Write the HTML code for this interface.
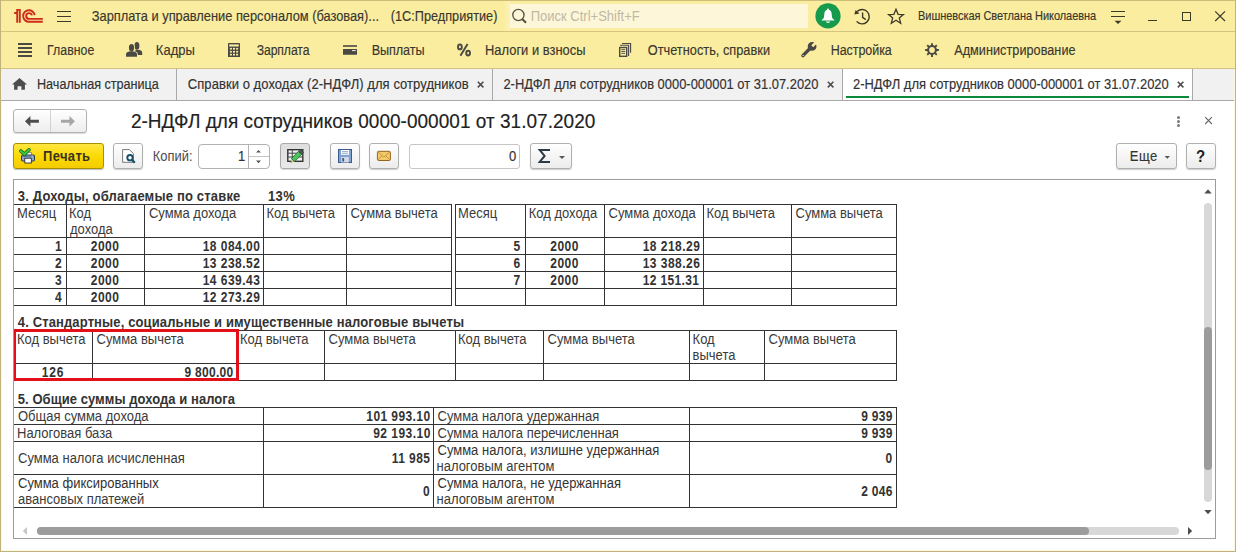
<!DOCTYPE html>
<html><head><meta charset="utf-8"><style>
html,body{margin:0;padding:0;}
body{width:1236px;height:552px;overflow:hidden;position:relative;font-family:"Liberation Sans",sans-serif;background:#fff;}
.r{position:absolute;}
.t{position:absolute;white-space:nowrap;}
</style></head><body>
<div class="r" style="left:13px;top:109px;width:74px;height:24px;border:1px solid #b2b2b2;border-radius:3px;box-sizing:border-box;background:linear-gradient(#ffffff,#ededed);box-shadow:0 1px 1px rgba(0,0,0,0.15)"></div>
<div class="r" style="left:50px;top:110px;width:1px;height:22px;background:#d2d2d2"></div>
<svg class="r" style="left:23px;top:114px" width="18" height="14" viewBox="23 114 18 14"><path d="M25 121.3 L30.4 116.1 L30.4 119.8 L38.9 119.8 L38.9 122.8 L30.4 122.8 L30.4 126.6 Z" fill="#4d4d4d"/></svg>
<svg class="r" style="left:59px;top:114px" width="18" height="14" viewBox="59 114 18 14"><path d="M74.9 121.3 L69.5 116.1 L69.5 119.8 L61 119.8 L61 122.8 L69.5 122.8 L69.5 126.6 Z" fill="#a6a6a6"/></svg>
<div class="t" style="left:130.90px;top:110px;font-size:19px;line-height:24px;color:#222;letter-spacing:0.023px;-webkit-text-stroke:0.15px #222;transform:scaleY(1.080);transform-origin:0 18px;">2-НДФЛ для сотрудников 0000-000001 от 31.07.2020</div>
<div class="r" style="left:1177px;top:115.5px;width:3px;height:3px;background:#7a7a7a;border-radius:50%"></div>
<div class="r" style="left:1177px;top:119.5px;width:3px;height:3px;background:#7a7a7a;border-radius:50%"></div>
<div class="r" style="left:1177px;top:123.5px;width:3px;height:3px;background:#7a7a7a;border-radius:50%"></div>
<svg class="r" style="left:1203px;top:115px" width="11" height="11" viewBox="1203 115 11 11"><path d="M1205.2 117.2 L1211.9 124 M1211.9 117.2 L1205.2 124" stroke="#666" stroke-width="1.1"/></svg>
<div class="r" style="left:13px;top:143px;width:91px;height:26px;border:1px solid #a89000;border-radius:3px;box-sizing:border-box;background:linear-gradient(#ffe640,#fcd900 55%,#f4cc00);box-shadow:0 1px 1px rgba(0,0,0,0.25)"></div>
<svg class="r" style="left:18px;top:146px" width="20" height="20" viewBox="18 146 20 20"><rect x="26.6" y="152.3" width="4.8" height="3.2" fill="#fff" stroke="#666" stroke-width="0.6"/>
<rect x="21.5" y="155" width="13" height="6" rx="1" fill="#8ba2c9" stroke="#2a3a4f" stroke-width="1"/>
<path d="M22.3 156.3 L33.7 156.3" stroke="#5c76a0" stroke-width="1"/>
<rect x="31.5" y="155.8" width="1.2" height="0.9" fill="#fff"/>
<rect x="24.8" y="158.2" width="6.5" height="4.8" fill="#fff" stroke="#2f2f2f" stroke-width="0.9"/>
<path d="M20.9 151 L24.4 154.2 L29 149.8" stroke="#1d6a1d" stroke-width="3.6" fill="none" stroke-linecap="round"/>
<path d="M20.9 151 L24.4 154.2 L29 149.8" stroke="#3ccb3c" stroke-width="2" fill="none" stroke-linecap="round"/></svg>
<div class="t" style="left:43.00px;top:149px;font-size:13px;line-height:16px;color:#383421;letter-spacing:0.340px;font-weight:bold;transform:scaleY(1.080);transform-origin:0 12px;">Печать</div>
<div class="r" style="left:113px;top:143px;width:30px;height:26px;border:1px solid #b0b0b0;border-radius:3px;box-sizing:border-box;background:linear-gradient(#ffffff,#ececec);box-shadow:0 1px 1px rgba(0,0,0,0.2)"></div>
<svg class="r" style="left:120px;top:147px" width="18" height="18" viewBox="120 147 18 18"><path d="M122.6 149.6 L129.3 149.6 L133.3 153.4 L133.3 162.3 L122.6 162.3 Z" fill="#fff" stroke="#6a6a6a" stroke-width="0.9"/>
<circle cx="130" cy="157.7" r="2.7" fill="none" stroke="#154e66" stroke-width="1.9"/>
<path d="M131.9 159.7 L134.8 162.8" stroke="#154e66" stroke-width="2.2"/></svg>
<div class="t" style="left:152.80px;top:149px;font-size:12.95px;line-height:16px;color:#4d4d4d;letter-spacing:-0.020px;transform:scaleY(1.084);transform-origin:0 12px;">Копий:</div>
<div class="r" style="left:198px;top:144px;width:72px;height:25px;border:1px solid #b2b2b2;border-radius:4px;box-sizing:border-box;background:#fff"></div>
<div class="r" style="left:248px;top:145px;width:1px;height:23px;background:#b2b2b2"></div>
<div class="r" style="left:249px;top:156px;width:20px;height:1px;background:#c4c4c4"></div>
<svg class="r" style="left:254px;top:148px" width="9" height="16" viewBox="254 148 9 16"><path d="M256 152.6 L261 152.6 L258.5 150 Z M256 160.6 L261 160.6 L258.5 163.2 Z" fill="#555"/></svg>
<div class="t" style="left:238.00px;top:149px;font-size:13px;line-height:16px;color:#333;-webkit-text-stroke:0.15px #333;transform:scaleY(1.080);transform-origin:0 12px;">1</div>
<div class="r" style="left:280px;top:143px;width:30px;height:26px;border:1px solid #aaaaaa;border-radius:3px;box-sizing:border-box;background:linear-gradient(#dedede,#e9e9e9);box-shadow:0 1px 1px rgba(0,0,0,0.15)"></div>
<svg class="r" style="left:285px;top:147px" width="20" height="18" viewBox="285 147 20 18"><rect x="287.8" y="149.7" width="15" height="11.6" fill="#f2f2f2" stroke="#333" stroke-width="1.4"/>
<path d="M287.8 153.2 L302.8 153.2 M287.8 157 L302.8 157 M292.3 149.7 L292.3 161.3" stroke="#444" stroke-width="1"/>
<g transform="rotate(-45 296.5 156.5)">
<path d="M288 156.5 L291.5 154.3 L291.5 158.7 Z" fill="#d9c48a"/>
<path d="M288 156.5 L289.3 155.7 L289.3 157.3 Z" fill="#333"/>
<rect x="291.5" y="154.3" width="10" height="4.4" fill="#4cc35a" stroke="#23602c" stroke-width="0.7"/>
<rect x="301.5" y="154.3" width="2.8" height="4.4" fill="#4f5a55" stroke="#2f3a35" stroke-width="0.6"/>
</g></svg>
<div class="r" style="left:330px;top:143px;width:30px;height:26px;border:1px solid #b0b0b0;border-radius:3px;box-sizing:border-box;background:linear-gradient(#ffffff,#ececec);box-shadow:0 1px 1px rgba(0,0,0,0.2)"></div>
<svg class="r" style="left:336px;top:147px" width="18" height="18" viewBox="336 147 18 18"><rect x="338.5" y="149.5" width="13" height="13" fill="#7fa3d3" stroke="#3b5b8e" stroke-width="1"/>
<rect x="341" y="150" width="8" height="4.8" fill="#fff"/>
<path d="M342 151.6 L348 151.6 M342 153.3 L348 153.3" stroke="#7f97bb" stroke-width="0.8"/>
<rect x="341.2" y="157" width="7.6" height="5.5" fill="#d5dbe4"/>
<rect x="342.3" y="158" width="1.8" height="3.5" fill="#3b5b8e"/></svg>
<div class="r" style="left:369px;top:143px;width:30px;height:26px;border:1px solid #b0b0b0;border-radius:3px;box-sizing:border-box;background:linear-gradient(#ffffff,#ececec);box-shadow:0 1px 1px rgba(0,0,0,0.2)"></div>
<svg class="r" style="left:375px;top:149px" width="18" height="14" viewBox="375 149 18 14"><rect x="377.4" y="151.3" width="13" height="9.2" rx="1.2" fill="#f3ca6a" stroke="#94661c" stroke-width="1"/>
<path d="M377.8 151.8 L383.9 157 L390 151.8 M377.8 160 L382 155.8 M390 160 L385.8 155.8" stroke="#b98a34" stroke-width="0.8" fill="none"/></svg>
<div class="r" style="left:409px;top:144px;width:111px;height:25px;border:1px solid #c6c6c6;border-radius:3px;box-sizing:border-box;background:#fff"></div>
<div class="t" style="left:509.00px;top:149px;font-size:13px;line-height:16px;color:#333;-webkit-text-stroke:0.15px #333;transform:scaleY(1.080);transform-origin:0 12px;">0</div>
<div class="r" style="left:530px;top:143px;width:42px;height:26px;border:1px solid #b0b0b0;border-radius:3px;box-sizing:border-box;background:linear-gradient(#ffffff,#ececec);box-shadow:0 1px 1px rgba(0,0,0,0.2)"></div>
<svg class="r" style="left:536px;top:147px" width="18" height="18" viewBox="536 147 18 18"><path d="M550 150 L539.7 150 L544.6 155.9 L539.7 161.9 L550 161.9" stroke="#2f3a44" stroke-width="2" fill="none" stroke-linejoin="miter"/></svg>
<svg class="r" style="left:557px;top:154px" width="10" height="6" viewBox="557 154 10 6"><path d="M559 156.1 L565 156.1 L562 159.1 Z" fill="#555"/></svg>
<div class="r" style="left:1116px;top:143px;width:61px;height:26px;border:1px solid #b0b0b0;border-radius:3px;box-sizing:border-box;background:linear-gradient(#ffffff,#ececec);box-shadow:0 1px 1px rgba(0,0,0,0.2)"></div>
<div class="t" style="left:1129.80px;top:149px;font-size:13px;line-height:16px;color:#333;letter-spacing:0.500px;-webkit-text-stroke:0.15px #333;transform:scaleY(1.080);transform-origin:0 12px;">Еще</div>
<svg class="r" style="left:1162px;top:154px" width="10" height="6" viewBox="1162 154 10 6"><path d="M1164.6 156.1 L1170 156.1 L1167.3 158.8 Z" fill="#555"/></svg>
<div class="r" style="left:1186px;top:143px;width:30px;height:26px;border:1px solid #b0b0b0;border-radius:3px;box-sizing:border-box;background:linear-gradient(#ffffff,#ececec);box-shadow:0 1px 1px rgba(0,0,0,0.2)"></div>
<div class="t" style="left:1196.00px;top:147px;font-size:15px;line-height:19px;color:#222;font-weight:bold;transform:scaleY(1.080);transform-origin:0 15px;">?</div>
<div class="r" style="left:13px;top:179px;width:1203px;height:360px;border:1px solid #9c9c9c;box-sizing:border-box;background:#fff"></div>
<div class="t" style="left:17.80px;top:189px;font-size:13px;line-height:16px;color:#333;letter-spacing:0.180px;font-weight:bold;transform:scaleY(1.080);transform-origin:0 12px;">3. Доходы, облагаемые по ставке</div>
<div class="t" style="left:267.90px;top:189px;font-size:13px;line-height:16px;color:#333;letter-spacing:0.400px;font-weight:bold;transform:scaleY(1.080);transform-origin:0 12px;">13%</div>
<div class="r" style="left:13px;top:204px;width:439px;height:1px;background:#333"></div>
<div class="r" style="left:13px;top:237px;width:439px;height:1px;background:#333"></div>
<div class="r" style="left:13px;top:254px;width:439px;height:1px;background:#333"></div>
<div class="r" style="left:13px;top:271px;width:439px;height:1px;background:#333"></div>
<div class="r" style="left:13px;top:288px;width:439px;height:1px;background:#333"></div>
<div class="r" style="left:13px;top:305px;width:439px;height:1px;background:#333"></div>
<div class="r" style="left:13px;top:204px;width:1px;height:102px;background:#333"></div>
<div class="r" style="left:66px;top:204px;width:1px;height:102px;background:#333"></div>
<div class="r" style="left:144px;top:204px;width:1px;height:102px;background:#333"></div>
<div class="r" style="left:263px;top:204px;width:1px;height:102px;background:#333"></div>
<div class="r" style="left:346px;top:204px;width:1px;height:102px;background:#333"></div>
<div class="r" style="left:451px;top:204px;width:1px;height:102px;background:#333"></div>
<div class="r" style="left:455px;top:204px;width:442px;height:1px;background:#333"></div>
<div class="r" style="left:455px;top:237px;width:442px;height:1px;background:#333"></div>
<div class="r" style="left:455px;top:254px;width:442px;height:1px;background:#333"></div>
<div class="r" style="left:455px;top:271px;width:442px;height:1px;background:#333"></div>
<div class="r" style="left:455px;top:288px;width:442px;height:1px;background:#333"></div>
<div class="r" style="left:455px;top:305px;width:442px;height:1px;background:#333"></div>
<div class="r" style="left:455px;top:204px;width:1px;height:102px;background:#333"></div>
<div class="r" style="left:525px;top:204px;width:1px;height:102px;background:#333"></div>
<div class="r" style="left:604px;top:204px;width:1px;height:102px;background:#333"></div>
<div class="r" style="left:703px;top:204px;width:1px;height:102px;background:#333"></div>
<div class="r" style="left:791px;top:204px;width:1px;height:102px;background:#333"></div>
<div class="r" style="left:896px;top:204px;width:1px;height:102px;background:#333"></div>
<div class="t" style="left:17.00px;top:206px;font-size:13px;line-height:16px;color:#3b3b3b;transform:scaleY(1.080);transform-origin:0 12px;">Месяц</div>
<div class="t" style="left:69.00px;top:206px;font-size:13px;line-height:16px;color:#3b3b3b;transform:scaleY(1.080);transform-origin:0 12px;">Код</div>
<div class="t" style="left:70.00px;top:222px;font-size:13px;line-height:16px;color:#3b3b3b;transform:scaleY(1.080);transform-origin:0 12px;">дохода</div>
<div class="t" style="left:148.90px;top:206px;font-size:13px;line-height:16px;color:#3b3b3b;transform:scaleY(1.080);transform-origin:0 12px;">Сумма дохода</div>
<div class="t" style="left:266.50px;top:206px;font-size:13px;line-height:16px;color:#3b3b3b;transform:scaleY(1.080);transform-origin:0 12px;">Код вычета</div>
<div class="t" style="left:350.40px;top:206px;font-size:13px;line-height:16px;color:#3b3b3b;transform:scaleY(1.080);transform-origin:0 12px;">Сумма вычета</div>
<div class="t" style="left:458.00px;top:206px;font-size:13px;line-height:16px;color:#3b3b3b;transform:scaleY(1.080);transform-origin:0 12px;">Месяц</div>
<div class="t" style="left:528.70px;top:206px;font-size:13px;line-height:16px;color:#3b3b3b;transform:scaleY(1.080);transform-origin:0 12px;">Код дохода</div>
<div class="t" style="left:608.50px;top:206px;font-size:13px;line-height:16px;color:#3b3b3b;transform:scaleY(1.080);transform-origin:0 12px;">Сумма дохода</div>
<div class="t" style="left:706.50px;top:206px;font-size:13px;line-height:16px;color:#3b3b3b;transform:scaleY(1.080);transform-origin:0 12px;">Код вычета</div>
<div class="t" style="left:795.50px;top:206px;font-size:13px;line-height:16px;color:#3b3b3b;transform:scaleY(1.080);transform-origin:0 12px;">Сумма вычета</div>
<div class="t" style="left:55.00px;top:240px;font-size:12px;line-height:15px;color:#333;font-weight:bold;transform:scaleY(1.150);transform-origin:0 11px;">1</div>
<div class="t" style="left:90.79px;top:240px;font-size:12px;line-height:15px;color:#333;letter-spacing:0.473px;font-weight:bold;transform:scaleY(1.150);transform-origin:0 11px;">2000</div>
<div class="t" style="left:202.66px;top:240px;font-size:12px;line-height:15px;color:#333;letter-spacing:0.480px;font-weight:bold;transform:scaleY(1.150);transform-origin:0 11px;">18 084.00</div>
<div class="t" style="left:55.00px;top:257px;font-size:12px;line-height:15px;color:#333;font-weight:bold;transform:scaleY(1.150);transform-origin:0 11px;">2</div>
<div class="t" style="left:90.79px;top:257px;font-size:12px;line-height:15px;color:#333;letter-spacing:0.473px;font-weight:bold;transform:scaleY(1.150);transform-origin:0 11px;">2000</div>
<div class="t" style="left:202.66px;top:257px;font-size:12px;line-height:15px;color:#333;letter-spacing:0.480px;font-weight:bold;transform:scaleY(1.150);transform-origin:0 11px;">13 238.52</div>
<div class="t" style="left:55.00px;top:274px;font-size:12px;line-height:15px;color:#333;font-weight:bold;transform:scaleY(1.150);transform-origin:0 11px;">3</div>
<div class="t" style="left:90.79px;top:274px;font-size:12px;line-height:15px;color:#333;letter-spacing:0.473px;font-weight:bold;transform:scaleY(1.150);transform-origin:0 11px;">2000</div>
<div class="t" style="left:202.66px;top:274px;font-size:12px;line-height:15px;color:#333;letter-spacing:0.480px;font-weight:bold;transform:scaleY(1.150);transform-origin:0 11px;">14 639.43</div>
<div class="t" style="left:55.00px;top:291px;font-size:12px;line-height:15px;color:#333;font-weight:bold;transform:scaleY(1.150);transform-origin:0 11px;">4</div>
<div class="t" style="left:90.79px;top:291px;font-size:12px;line-height:15px;color:#333;letter-spacing:0.473px;font-weight:bold;transform:scaleY(1.150);transform-origin:0 11px;">2000</div>
<div class="t" style="left:202.66px;top:291px;font-size:12px;line-height:15px;color:#333;letter-spacing:0.480px;font-weight:bold;transform:scaleY(1.150);transform-origin:0 11px;">12 273.29</div>
<div class="t" style="left:513.50px;top:240px;font-size:12px;line-height:15px;color:#333;font-weight:bold;transform:scaleY(1.150);transform-origin:0 11px;">5</div>
<div class="t" style="left:550.29px;top:240px;font-size:12px;line-height:15px;color:#333;letter-spacing:0.473px;font-weight:bold;transform:scaleY(1.150);transform-origin:0 11px;">2000</div>
<div class="t" style="left:642.66px;top:240px;font-size:12px;line-height:15px;color:#333;letter-spacing:0.480px;font-weight:bold;transform:scaleY(1.150);transform-origin:0 11px;">18 218.29</div>
<div class="t" style="left:513.50px;top:257px;font-size:12px;line-height:15px;color:#333;font-weight:bold;transform:scaleY(1.150);transform-origin:0 11px;">6</div>
<div class="t" style="left:550.29px;top:257px;font-size:12px;line-height:15px;color:#333;letter-spacing:0.473px;font-weight:bold;transform:scaleY(1.150);transform-origin:0 11px;">2000</div>
<div class="t" style="left:642.66px;top:257px;font-size:12px;line-height:15px;color:#333;letter-spacing:0.480px;font-weight:bold;transform:scaleY(1.150);transform-origin:0 11px;">13 388.26</div>
<div class="t" style="left:513.50px;top:274px;font-size:12px;line-height:15px;color:#333;font-weight:bold;transform:scaleY(1.150);transform-origin:0 11px;">7</div>
<div class="t" style="left:550.29px;top:274px;font-size:12px;line-height:15px;color:#333;letter-spacing:0.473px;font-weight:bold;transform:scaleY(1.150);transform-origin:0 11px;">2000</div>
<div class="t" style="left:642.66px;top:274px;font-size:12px;line-height:15px;color:#333;letter-spacing:0.355px;font-weight:bold;transform:scaleY(1.150);transform-origin:0 11px;">12 151.31</div>
<div class="t" style="left:17.80px;top:315px;font-size:13px;line-height:16px;color:#333;letter-spacing:0.129px;font-weight:bold;transform:scaleY(1.080);transform-origin:0 12px;">4. Стандартные, социальные и имущественные налоговые вычеты</div>
<div class="r" style="left:13px;top:330px;width:884px;height:1px;background:#333"></div>
<div class="r" style="left:13px;top:363px;width:884px;height:1px;background:#333"></div>
<div class="r" style="left:13px;top:380px;width:884px;height:1px;background:#333"></div>
<div class="r" style="left:13px;top:330px;width:1px;height:51px;background:#333"></div>
<div class="r" style="left:92px;top:330px;width:1px;height:51px;background:#333"></div>
<div class="r" style="left:237px;top:330px;width:1px;height:51px;background:#333"></div>
<div class="r" style="left:324px;top:330px;width:1px;height:51px;background:#333"></div>
<div class="r" style="left:455px;top:330px;width:1px;height:51px;background:#333"></div>
<div class="r" style="left:543px;top:330px;width:1px;height:51px;background:#333"></div>
<div class="r" style="left:689px;top:330px;width:1px;height:51px;background:#333"></div>
<div class="r" style="left:764px;top:330px;width:1px;height:51px;background:#333"></div>
<div class="r" style="left:896px;top:330px;width:1px;height:51px;background:#333"></div>
<div class="t" style="left:17.00px;top:332px;font-size:13px;line-height:16px;color:#3b3b3b;transform:scaleY(1.080);transform-origin:0 12px;">Код вычета</div>
<div class="t" style="left:96.50px;top:332px;font-size:13px;line-height:16px;color:#3b3b3b;transform:scaleY(1.080);transform-origin:0 12px;">Сумма вычета</div>
<div class="t" style="left:240.00px;top:332px;font-size:13px;line-height:16px;color:#3b3b3b;transform:scaleY(1.080);transform-origin:0 12px;">Код вычета</div>
<div class="t" style="left:328.50px;top:332px;font-size:13px;line-height:16px;color:#3b3b3b;transform:scaleY(1.080);transform-origin:0 12px;">Сумма вычета</div>
<div class="t" style="left:458.00px;top:332px;font-size:13px;line-height:16px;color:#3b3b3b;transform:scaleY(1.080);transform-origin:0 12px;">Код вычета</div>
<div class="t" style="left:547.50px;top:332px;font-size:13px;line-height:16px;color:#3b3b3b;transform:scaleY(1.080);transform-origin:0 12px;">Сумма вычета</div>
<div class="t" style="left:692.60px;top:332px;font-size:13px;line-height:16px;color:#3b3b3b;transform:scaleY(1.080);transform-origin:0 12px;">Код</div>
<div class="t" style="left:692.60px;top:348px;font-size:13px;line-height:16px;color:#3b3b3b;transform:scaleY(1.080);transform-origin:0 12px;">вычета</div>
<div class="t" style="left:768.50px;top:332px;font-size:13px;line-height:16px;color:#3b3b3b;transform:scaleY(1.080);transform-origin:0 12px;">Сумма вычета</div>
<div class="t" style="left:41.82px;top:366px;font-size:12px;line-height:15px;color:#333;letter-spacing:0.780px;font-weight:bold;transform:scaleY(1.150);transform-origin:0 11px;">126</div>
<div class="t" style="left:184.50px;top:366px;font-size:12px;line-height:15px;color:#333;letter-spacing:0.286px;font-weight:bold;transform:scaleY(1.150);transform-origin:0 11px;">9 800.00</div>
<div class="r" style="left:13px;top:329px;width:226px;height:52px;border:3px solid #e3101a;box-sizing:border-box"></div>
<div class="t" style="left:17.80px;top:392px;font-size:13px;line-height:16px;color:#333;letter-spacing:0.055px;font-weight:bold;transform:scaleY(1.080);transform-origin:0 12px;">5. Общие суммы дохода и налога</div>
<div class="r" style="left:13px;top:407px;width:884px;height:1px;background:#333"></div>
<div class="r" style="left:13px;top:424px;width:884px;height:1px;background:#333"></div>
<div class="r" style="left:13px;top:441px;width:884px;height:1px;background:#333"></div>
<div class="r" style="left:13px;top:474px;width:884px;height:1px;background:#333"></div>
<div class="r" style="left:13px;top:507px;width:884px;height:1px;background:#333"></div>
<div class="r" style="left:13px;top:407px;width:1px;height:101px;background:#333"></div>
<div class="r" style="left:263px;top:407px;width:1px;height:101px;background:#333"></div>
<div class="r" style="left:433px;top:407px;width:1px;height:101px;background:#333"></div>
<div class="r" style="left:689px;top:407px;width:1px;height:101px;background:#333"></div>
<div class="r" style="left:896px;top:407px;width:1px;height:101px;background:#333"></div>
<div class="t" style="left:18.00px;top:409px;font-size:13px;line-height:16px;color:#3b3b3b;transform:scaleY(1.080);transform-origin:0 12px;">Общая сумма дохода</div>
<div class="t" style="left:366.30px;top:410px;font-size:12px;line-height:15px;color:#333;letter-spacing:0.411px;font-weight:bold;transform:scaleY(1.150);transform-origin:0 11px;">101 993.10</div>
<div class="t" style="left:437.50px;top:409px;font-size:13px;line-height:16px;color:#3b3b3b;transform:scaleY(1.080);transform-origin:0 12px;">Сумма налога удержанная</div>
<div class="t" style="left:861.14px;top:410px;font-size:12px;line-height:15px;color:#333;letter-spacing:0.340px;font-weight:bold;transform:scaleY(1.150);transform-origin:0 11px;">9 939</div>
<div class="t" style="left:17.00px;top:426px;font-size:13px;line-height:16px;color:#3b3b3b;transform:scaleY(1.080);transform-origin:0 12px;">Налоговая база</div>
<div class="t" style="left:373.16px;top:427px;font-size:12px;line-height:15px;color:#333;letter-spacing:0.480px;font-weight:bold;transform:scaleY(1.150);transform-origin:0 11px;">92 193.10</div>
<div class="t" style="left:437.50px;top:426px;font-size:13px;line-height:16px;color:#3b3b3b;transform:scaleY(1.080);transform-origin:0 12px;">Сумма налога перечисленная</div>
<div class="t" style="left:861.14px;top:427px;font-size:12px;line-height:15px;color:#333;letter-spacing:0.340px;font-weight:bold;transform:scaleY(1.150);transform-origin:0 11px;">9 939</div>
<div class="t" style="left:18.00px;top:451px;font-size:13px;line-height:16px;color:#3b3b3b;transform:scaleY(1.080);transform-origin:0 12px;">Сумма налога исчисленная</div>
<div class="t" style="left:391.78px;top:452px;font-size:12px;line-height:15px;color:#333;letter-spacing:0.444px;font-weight:bold;transform:scaleY(1.150);transform-origin:0 11px;">11 985</div>
<div class="t" style="left:437.50px;top:443px;font-size:13px;line-height:16px;color:#333;transform:scaleY(1.080);transform-origin:0 12px;">Сумма налога, излишне удержанная</div>
<div class="t" style="left:436.50px;top:459px;font-size:13px;line-height:16px;color:#3b3b3b;transform:scaleY(1.080);transform-origin:0 12px;">налоговым агентом</div>
<div class="t" style="left:885.50px;top:452px;font-size:12px;line-height:15px;color:#333;font-weight:bold;transform:scaleY(1.150);transform-origin:0 11px;">0</div>
<div class="t" style="left:18.00px;top:476px;font-size:13px;line-height:16px;color:#333;transform:scaleY(1.080);transform-origin:0 12px;">Сумма фиксированных</div>
<div class="t" style="left:18.00px;top:492px;font-size:13px;line-height:16px;color:#3b3b3b;transform:scaleY(1.080);transform-origin:0 12px;">авансовых платежей</div>
<div class="t" style="left:423.00px;top:485px;font-size:12px;line-height:15px;color:#333;font-weight:bold;transform:scaleY(1.150);transform-origin:0 11px;">0</div>
<div class="t" style="left:437.50px;top:476px;font-size:13px;line-height:16px;color:#333;transform:scaleY(1.080);transform-origin:0 12px;">Сумма налога, не удержанная</div>
<div class="t" style="left:436.50px;top:492px;font-size:13px;line-height:16px;color:#3b3b3b;transform:scaleY(1.080);transform-origin:0 12px;">налоговым агентом</div>
<div class="t" style="left:861.14px;top:485px;font-size:12px;line-height:15px;color:#333;letter-spacing:0.340px;font-weight:bold;transform:scaleY(1.150);transform-origin:0 11px;">2 046</div>
<div class="r" style="left:13px;top:179px;width:1px;height:360px;background:#9c9c9c"></div>
<svg class="r" style="left:1202px;top:186px" width="12" height="10" viewBox="1202 186 12 10"><path d="M1204.3 193.5 L1211.7 193.5 L1208 189.3 Z" fill="#4d4d4d"/></svg>
<div class="r" style="left:1204px;top:203px;width:8px;height:299px;background:#d8d8d8;border-radius:4px"></div>
<div class="r" style="left:1204px;top:327px;width:8px;height:143px;background:#9c9c9c;border-radius:4px"></div>
<svg class="r" style="left:1202px;top:507px" width="12" height="10" viewBox="1202 507 12 10"><path d="M1204.3 510 L1211.7 510 L1208 514.2 Z" fill="#4d4d4d"/></svg>
<svg class="r" style="left:20px;top:525px" width="10" height="12" viewBox="20 525 10 12"><path d="M27 527 L27 535 L22.8 531 Z" fill="#c6c6c6"/></svg>
<div class="r" style="left:37px;top:527px;width:1142px;height:8px;background:#d8d8d8;border-radius:4px"></div>
<div class="r" style="left:37px;top:527px;width:1052px;height:8px;background:#9c9c9c;border-radius:4px"></div>
<svg class="r" style="left:1185px;top:525px" width="10" height="12" viewBox="1185 525 10 12"><path d="M1188 527 L1188 535 L1192.2 531 Z" fill="#4d4d4d"/></svg>
<div class="r" style="left:0px;top:0px;width:1236px;height:69px;background:#fbeda0"></div>
<div class="r" style="left:0px;top:0px;width:1236px;height:1px;background:#cdbd78"></div>
<div class="r" style="left:0px;top:31px;width:1236px;height:1px;background:#d6c47e"></div>
<div class="r" style="left:0px;top:68px;width:1236px;height:1px;background:#d3c282"></div>
<div class="r" style="left:0px;top:69px;width:1236px;height:31px;background:#f1f1f1"></div>
<div class="r" style="left:0px;top:100px;width:1236px;height:1px;background:#a8a8a8"></div>
<svg class="r" style="left:10px;top:5px" width="36" height="22" viewBox="10 5 36 22"><g stroke="#cf2b1b" stroke-width="1.9" fill="none">
<path d="M14.2 13 L17.2 13 L17.2 22.8 M17.2 13 L17.2 9.9 L19.8 9.9 L19.8 22.8"/>
<path d="M34.7 15.2 A5.8 5.8 0 1 0 29 21.8 L42.8 21.8"/>
<path d="M31.9 15.4 A2.9 2.9 0 1 0 29 18.9 L42.8 18.9"/>
</g></svg>
<div class="r" style="left:57px;top:11px;width:14px;height:1.3px;background:#3e3b2c"></div>
<div class="r" style="left:57px;top:16px;width:14px;height:1.3px;background:#3e3b2c"></div>
<div class="r" style="left:57px;top:21px;width:14px;height:1.3px;background:#3e3b2c"></div>
<div class="t" style="left:91.80px;top:9px;font-size:12.85px;line-height:16px;color:#3a382e;letter-spacing:-0.011px;-webkit-text-stroke:0.15px #3a382e;transform:scaleY(1.093);transform-origin:0 12px;">Зарплата и управление персоналом (базовая)...</div>
<div class="t" style="left:390.70px;top:9px;font-size:12.7px;line-height:16px;color:#3a382e;letter-spacing:0.020px;-webkit-text-stroke:0.15px #3a382e;transform:scaleY(1.106);transform-origin:0 12px;">(1С:Предприятие)</div>
<div class="r" style="left:504px;top:1px;width:6px;height:30px;background:linear-gradient(90deg,#fbeda0,#fcf1bb)"></div>
<div class="r" style="left:510px;top:4px;width:298px;height:24px;background:#fdf6d8"></div>
<svg class="r" style="left:508px;top:6px" width="22" height="22" viewBox="508 6 22 22"><circle cx="518.4" cy="15" r="5.6" stroke="#55503f" stroke-width="1.3" fill="none"/>
<path d="M522.2 19 L526 22.8" stroke="#55503f" stroke-width="2.1"/></svg>
<div class="t" style="left:530.70px;top:9px;font-size:13px;line-height:16px;color:#bfb9a4;transform:scaleY(1.080);transform-origin:0 12px;">Поиск Ctrl+Shift+F</div>
<svg class="r" style="left:814px;top:2px" width="28" height="28" viewBox="814 2 28 28"><circle cx="828" cy="15.9" r="12.6" fill="#169a4b"/>
<path d="M828 8.6 C827.2 8.6 827 9.2 827 9.8 C824.8 10.6 824.3 12.6 824.2 15.2 L823.8 18 L821.3 20.4 L834.7 20.4 L832.2 18 L831.8 15.2 C831.7 12.6 831.2 10.6 829 9.8 C829 9.2 828.8 8.6 828 8.6 Z" fill="#fff"/>
<path d="M825.8 21.6 L830.2 21.6 C829.8 22.6 829 23 828 23 C827 23 826.2 22.6 825.8 21.6Z" fill="#fff"/></svg>
<svg class="r" style="left:850px;top:5px" width="24" height="24" viewBox="850 5 24 24"><path d="M857.2 11.4 A7.2 7.2 0 1 1 856.6 21.4" stroke="#3e3a2a" stroke-width="1.4" fill="none"/>
<path d="M854.3 14.6 L859.4 13.4 L855.6 10 Z" fill="#3e3a2a"/>
<path d="M862.6 12.4 L862.6 17.4 L865.8 19.6" stroke="#3e3a2a" stroke-width="1.4" fill="none"/></svg>
<svg class="r" style="left:885px;top:5px" width="22" height="22" viewBox="885 5 22 22"><path d="M896 9.2 L898.1 14.3 L903.4 14.6 L899.3 18 L900.7 23.2 L896 20.2 L891.3 23.2 L892.7 18 L888.6 14.6 L893.9 14.3 Z" stroke="#3e3a2a" stroke-width="1.3" fill="none"/></svg>
<div class="t" style="left:918.00px;top:9px;font-size:11.0px;line-height:14px;color:#3a382e;letter-spacing:-0.045px;-webkit-text-stroke:0.15px #3a382e;transform:scaleY(1.080);transform-origin:0 11px;">Вишневская Светлана Николаевна</div>
<div class="r" style="left:1111px;top:11px;width:14px;height:1.3px;background:#3e3a2a"></div>
<div class="r" style="left:1111px;top:16px;width:14px;height:1.3px;background:#3e3a2a"></div>
<svg class="r" style="left:1112px;top:19px" width="12" height="6" viewBox="1112 19 12 6"><path d="M1114.5 20.8 L1121.5 20.8 L1118 24 Z" fill="#3e3a2a"/></svg>
<div class="r" style="left:1148px;top:20px;width:9px;height:1.4px;background:#3e3a2a"></div>
<div class="r" style="left:1182px;top:12px;width:9px;height:9px;border:1.3px solid #3e3a2a;box-sizing:border-box"></div>
<svg class="r" style="left:1212px;top:9px" width="16" height="15" viewBox="1212 9 16 15"><path d="M1215.2 11.4 L1225 21 M1225 11.4 L1215.2 21" stroke="#3e3a2a" stroke-width="1.2"/></svg>
<div class="r" style="left:18px;top:43px;width:14px;height:2px;background:#4a4944"></div>
<div class="r" style="left:18px;top:47px;width:14px;height:2px;background:#4a4944"></div>
<div class="r" style="left:18px;top:51px;width:14px;height:2px;background:#4a4944"></div>
<div class="r" style="left:18px;top:55px;width:14px;height:2px;background:#4a4944"></div>
<div class="t" style="left:47.00px;top:44px;font-size:12.3px;line-height:15px;color:#3a382e;letter-spacing:0.050px;-webkit-text-stroke:0.15px #3a382e;transform:scaleY(1.141);transform-origin:0 11px;">Главное</div>
<svg class="r" style="left:124px;top:40px" width="20" height="19" viewBox="124 40 20 19"><g fill="#4a4944">
<ellipse cx="136.9" cy="45.8" rx="2.5" ry="3.9"/>
<path d="M134 55 L134 52.5 C134 50.8 135.8 50 138 49.8 C140.5 50 142.2 50.9 142.2 52.6 L142.2 55 Z"/>
</g>
<g fill="#fbeda0" stroke="#fbeda0" stroke-width="1.6">
<ellipse cx="131.5" cy="47.8" rx="2.6" ry="3.7"/>
<path d="M126 56.8 L126 54.3 C126 52.3 128.2 51.4 131.5 51.2 C134.8 51.4 137 52.3 137 54.3 L137 56.8 Z"/>
</g>
<g fill="#4a4944">
<ellipse cx="131.5" cy="47.8" rx="2.6" ry="3.7"/>
<path d="M126 56.8 L126 54.3 C126 52.3 128.2 51.4 131.5 51.2 C134.8 51.4 137 52.3 137 54.3 L137 56.8 Z"/>
</g></svg>
<div class="t" style="left:155.80px;top:43px;font-size:13px;line-height:16px;color:#3a382e;letter-spacing:0.050px;-webkit-text-stroke:0.15px #3a382e;transform:scaleY(1.080);transform-origin:0 12px;">Кадры</div>
<svg class="r" style="left:226px;top:41px" width="16" height="18" viewBox="226 41 16 18"><rect x="228" y="43" width="12" height="14" rx="0.6" fill="#4a4944"/>
<rect x="229.2" y="44.4" width="9.6" height="2.1" fill="#fbeda0"/>
<g fill="#fbeda0">
<rect x="229.9" y="47.9" width="2" height="1.7"/><rect x="233" y="47.9" width="2" height="1.7"/><rect x="236.1" y="47.9" width="2" height="1.7"/>
<rect x="229.9" y="50.9" width="2" height="1.7"/><rect x="233" y="50.9" width="2" height="1.7"/><rect x="236.1" y="50.9" width="2" height="1.7"/>
<rect x="229.9" y="53.8" width="2" height="1.7"/><rect x="233" y="53.8" width="2" height="1.7"/><rect x="236.1" y="53.8" width="2" height="1.7"/>
</g></svg>
<div class="t" style="left:256.70px;top:44px;font-size:12.2px;line-height:15px;color:#3a382e;letter-spacing:-0.086px;-webkit-text-stroke:0.15px #3a382e;transform:scaleY(1.151);transform-origin:0 11px;">Зарплата</div>
<svg class="r" style="left:341px;top:43px" width="18" height="14" viewBox="341 43 18 14"><rect x="343" y="45.2" width="14" height="1.6" fill="#4a4944"/>
<rect x="343" y="48.9" width="14" height="5.9" rx="0.3" fill="#4a4944"/>
<rect x="352" y="50.1" width="3.8" height="1" fill="#f3ead0"/></svg>
<div class="t" style="left:371.70px;top:43px;font-size:12.65px;line-height:16px;color:#3a382e;letter-spacing:-0.083px;-webkit-text-stroke:0.15px #3a382e;transform:scaleY(1.110);transform-origin:0 12px;">Выплаты</div>
<svg class="r" style="left:454px;top:41px" width="20" height="18" viewBox="454 41 20 18"><g stroke="#4a4944" fill="none">
<ellipse cx="459.9" cy="46.9" rx="1.9" ry="2.4" stroke-width="1.9"/>
<ellipse cx="468.1" cy="53.1" rx="1.9" ry="2.4" stroke-width="1.9"/>
<path d="M467.6 44 L460.4 55.8" stroke-width="1.9"/>
</g></svg>
<div class="t" style="left:485.00px;top:43px;font-size:12.9px;line-height:16px;color:#3a382e;letter-spacing:0.021px;-webkit-text-stroke:0.15px #3a382e;transform:scaleY(1.088);transform-origin:0 12px;">Налоги и взносы</div>
<svg class="r" style="left:617px;top:41px" width="16" height="18" viewBox="617 41 16 18"><g stroke="#4a4944" fill="none">
<path d="M622 43.5 L630.6 43.5 L630.6 52.8" stroke-width="1.1"/>
<path d="M620.1 45.3 L628.6 45.3 L628.6 55.9" stroke-width="1.1"/>
<rect x="619.7" y="47.5" width="7" height="8.8" stroke-width="1.4"/>
<path d="M621.3 49.6 L625.2 49.6 M621.3 51.5 L625.2 51.5 M621.3 53.4 L625.2 53.4" stroke-width="0.9"/>
</g></svg>
<div class="t" style="left:647.70px;top:43px;font-size:12.75px;line-height:16px;color:#3a382e;letter-spacing:0.022px;-webkit-text-stroke:0.15px #3a382e;transform:scaleY(1.101);transform-origin:0 12px;">Отчетность, справки</div>
<svg class="r" style="left:799px;top:40px" width="20" height="19" viewBox="799 40 20 19"><g transform="translate(802.9 55.6) rotate(-45)">
<circle cx="0" cy="0" r="1.7" fill="#4a4944"/>
<rect x="0" y="-1.7" width="11" height="3.4" fill="#4a4944"/>
<circle cx="13" cy="0" r="4.4" fill="#4a4944"/>
<rect x="13.2" y="-1.35" width="5" height="2.7" fill="#fbeda0"/>
<circle cx="0.3" cy="0" r="0.65" fill="#fffbe8"/>
</g></svg>
<div class="t" style="left:830.70px;top:43px;font-size:12.5px;line-height:16px;color:#3a382e;letter-spacing:-0.050px;-webkit-text-stroke:0.15px #3a382e;transform:scaleY(1.123);transform-origin:0 12px;">Настройка</div>
<svg class="r" style="left:923px;top:41px" width="18" height="18" viewBox="923 41 18 18"><g stroke="#4a4944" stroke-width="1.9">
<path d="M932 43.2 L932 56.9 M925.1 50 L938.9 50 M927.2 45.2 L936.8 54.8 M936.8 45.2 L927.2 54.8"/>
</g>
<circle cx="932" cy="50" r="4.9" fill="#4a4944"/>
<circle cx="932" cy="50" r="2.9" fill="#fbeda0"/></svg>
<div class="t" style="left:954.20px;top:43px;font-size:12.65px;line-height:16px;color:#3a382e;letter-spacing:0.050px;-webkit-text-stroke:0.15px #3a382e;transform:scaleY(1.110);transform-origin:0 12px;">Администрирование</div>
<svg class="r" style="left:10px;top:76px" width="20" height="16" viewBox="10 76 20 16"><path d="M19.5 78 L27 84.4 L24.9 84.4 L24.9 89.8 L21.4 89.8 L21.4 86.2 L17.6 86.2 L17.6 89.8 L14.1 89.8 L14.1 84.4 L12 84.4 Z" fill="#4d4d4d"/></svg>
<div class="t" style="left:37.00px;top:77px;font-size:12.65px;line-height:16px;color:#333;letter-spacing:-0.029px;-webkit-text-stroke:0.15px #333;transform:scaleY(1.110);transform-origin:0 12px;">Начальная страница</div>
<div class="r" style="left:176px;top:69px;width:1px;height:31px;background:#a8a8a8"></div>
<div class="t" style="left:187.80px;top:77px;font-size:13px;line-height:16px;color:#333;letter-spacing:0.063px;-webkit-text-stroke:0.15px #333;transform:scaleY(1.080);transform-origin:0 12px;">Справки о доходах (2-НДФЛ) для сотрудников</div>
<svg class="r" style="left:476px;top:80px" width="10" height="10" viewBox="476 80 10 10"><path d="M477.8 81.8 L483.4 87.4 M483.4 81.8 L477.8 87.4" stroke="#4a4a4a" stroke-width="1.55"/></svg>
<div class="r" style="left:492px;top:69px;width:1px;height:31px;background:#a8a8a8"></div>
<div class="t" style="left:503.40px;top:77px;font-size:12.9px;line-height:16px;color:#333;letter-spacing:0.015px;-webkit-text-stroke:0.15px #333;transform:scaleY(1.088);transform-origin:0 12px;">2-НДФЛ для сотрудников 0000-000001 от 31.07.2020</div>
<svg class="r" style="left:826px;top:80px" width="10" height="10" viewBox="826 80 10 10"><path d="M827.8 81.8 L833.4 87.4 M833.4 81.8 L827.8 87.4" stroke="#4a4a4a" stroke-width="1.55"/></svg>
<div class="r" style="left:842px;top:69px;width:1px;height:31px;background:#a8a8a8"></div>
<div class="r" style="left:843px;top:69px;width:349px;height:31px;background:#fff"></div>
<div class="t" style="left:853.00px;top:77px;font-size:12.95px;line-height:16px;color:#333;letter-spacing:0.006px;-webkit-text-stroke:0.15px #333;transform:scaleY(1.084);transform-origin:0 12px;">2-НДФЛ для сотрудников 0000-000001 от 31.07.2020</div>
<svg class="r" style="left:1176px;top:80px" width="10" height="10" viewBox="1176 80 10 10"><path d="M1177.8 81.8 L1183.4 87.4 M1183.4 81.8 L1177.8 87.4" stroke="#4a4a4a" stroke-width="1.55"/></svg>
<div class="r" style="left:846px;top:95.6px;width:343px;height:2.4px;background:#0b8a3c"></div>
<div class="r" style="left:1192px;top:69px;width:1px;height:31px;background:#a8a8a8"></div>
<div class="r" style="left:0px;top:0px;width:1px;height:552px;background:#bfb27a"></div>
<div class="r" style="left:1235px;top:0px;width:1px;height:552px;background:#bfb27a"></div>
<div class="r" style="left:0px;top:551px;width:1236px;height:1px;background:#bfb27a"></div>
<div class="r" style="left:1px;top:101px;width:1px;height:450px;background:#fdf9dc"></div>
<div class="r" style="left:1234px;top:69px;width:1px;height:482px;background:#fdf9dc"></div>
<div class="r" style="left:1px;top:550px;width:1234px;height:1px;background:#fdf9dc"></div>
</body></html>
